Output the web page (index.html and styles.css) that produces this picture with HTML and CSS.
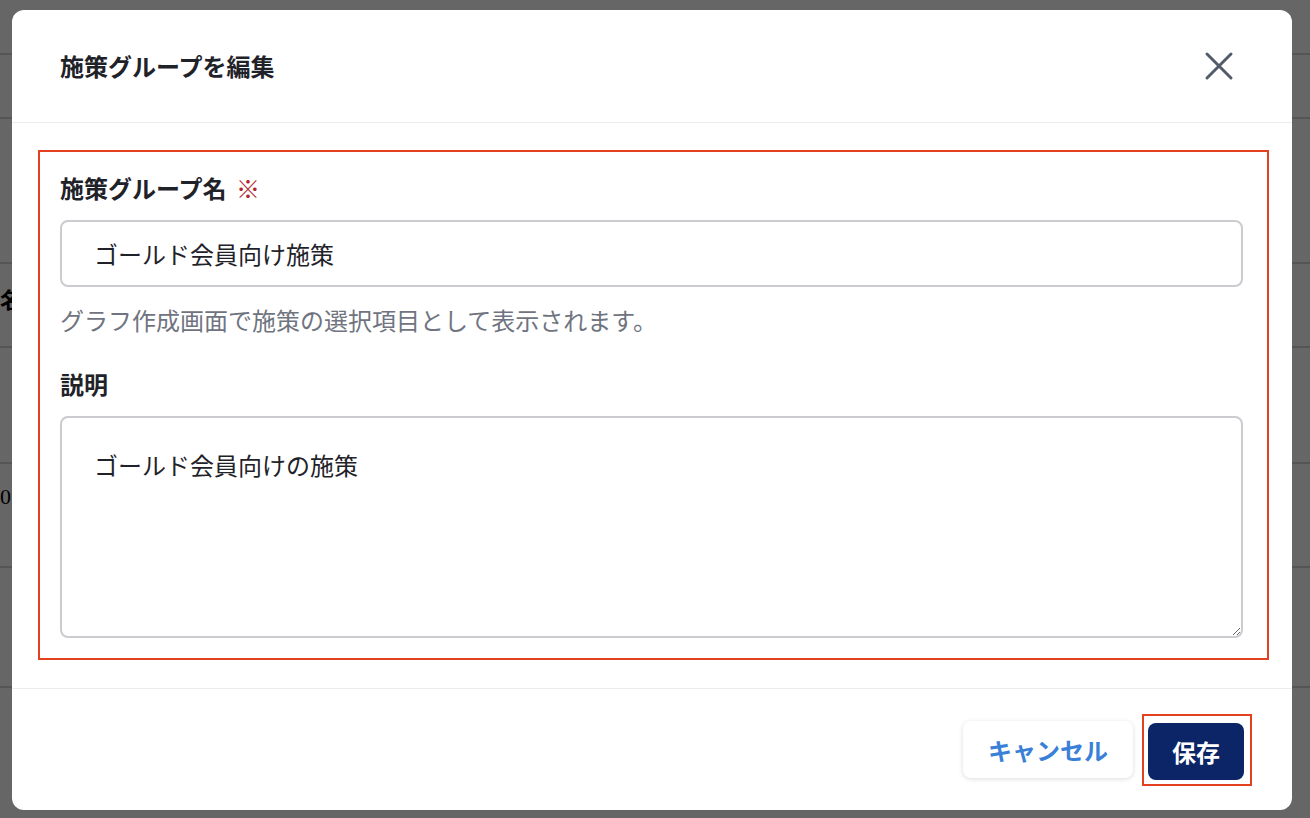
FILE: index.html
```html
<!DOCTYPE html>
<html lang="ja">
<head>
<meta charset="utf-8">
<title>施策グループを編集</title>
<link rel="stylesheet" href="styles.css">
</head>
<body>
<div class="page">
  <div class="page-row r1"></div>
  <div class="page-row r2"></div>
  <div class="page-row r3"></div>
  <div class="page-row r4"><span class="page-text bold">名前</span></div>
  <div class="page-row r5"></div>
  <div class="page-row r6"><span class="page-text serif">01</span></div>
  <div class="page-row r7"></div>
</div>
<div class="overlay"></div>
<div class="modal" role="dialog">
  <div class="modal-header">
    <h2 class="modal-title">施策グループを編集</h2>
    <button class="close-btn" aria-label="閉じる">
      <svg width="32" height="32" viewBox="0 0 32 32"><path d="M4 4 L28 28 M28 4 L4 28" stroke="#535b6b" stroke-width="3" stroke-linecap="round" fill="none"/></svg>
    </button>
  </div>
  <div class="modal-body">
    <div class="highlight">
      <label class="field-label">施策グループ名 <span class="req">※</span></label>
      <input class="text-input" type="text" value="ゴールド会員向け施策">
      <p class="help">グラフ作成画面で施策の選択項目として表示されます。</p>
      <label class="field-label desc-label">説明</label>
      <textarea class="text-area">ゴールド会員向けの施策</textarea>
    </div>
  </div>
  <div class="modal-footer">
    <button class="btn btn-cancel">キャンセル</button>
    <span class="save-mark"><button class="btn btn-save">保存</button></span>
  </div>
</div>
</body>
</html>
```
FILE: styles.css
```css
* { box-sizing: border-box; }
html, body { margin: 0; padding: 0; }
body {
  width: 1310px;
  height: 818px;
  overflow: hidden;
  font-family: "Noto Sans CJK JP", "Noto Sans", sans-serif;
  background: #ffffff;
  position: relative;
}
.page { width: 1310px; }
.page-row { border-bottom: 2px solid #d4d4d4; display: flex; }
.r1 { height: 55px; }
.r2 { height: 64px; }
.r3 { height: 145px; }
.r4 { height: 84px; align-items: center; padding-bottom: 14px; }
.r5 { height: 116px; }
.r6 { height: 104px; align-items: flex-start; padding-top: 18px; }
.r7 { height: 120px; }
.page-text { font-size: 22px; line-height: 30px; color: #000; }
.page-text.bold { font-weight: 700; }
.page-text.serif { font-family: "Liberation Serif", serif; }
.overlay {
  position: absolute;
  inset: 0;
  background: rgba(0, 0, 0, 0.6);
}
.modal {
  position: absolute;
  left: 12px;
  top: 10px;
  width: 1280px;
  height: 800px;
  background: #ffffff;
  border-radius: 12px;
  display: flex;
  flex-direction: column;
}
.modal-header {
  height: 113px;
  flex: none;
  display: flex;
  align-items: center;
  justify-content: space-between;
  padding: 0 57px 0 48px;
  border-bottom: 1.5px solid #ececec;
}
.modal-title {
  margin: 0;
  font-size: 24px;
  font-weight: 700;
  color: #1f2329;
  line-height: 36px;
}
.close-btn {
  border: none;
  background: none;
  padding: 0;
  width: 32px;
  height: 32px;
  display: flex;
}
.modal-body {
  flex: 1;
  padding: 27px 23px 0 26px;
  border-bottom: 1.5px solid #ececec;
}
.highlight {
  border: 2px solid #e3401f;
  padding: 18px 24px 20px 20px;
  display: flex;
  flex-direction: column;
}
.field-label {
  font-size: 24px;
  font-weight: 700;
  color: #1f2329;
  line-height: 36px;
  margin-bottom: 14px;
}
.req { color: #b3262d; font-weight: 400; margin-left: 4px; }
.text-input {
  height: 67px;
  border: 2px solid #cbcbd0;
  border-radius: 8px;
  padding: 0 32px;
  font-family: inherit;
  font-size: 24px;
  color: #1f2329;
  outline: none;
}
.help {
  margin: 15px 0 0;
  font-size: 24px;
  line-height: 36px;
  color: #6f7480;
}
.desc-label { margin-top: 28px; }
.text-area {
  height: 222px;
  border: 2px solid #cbcbd0;
  border-radius: 8px;
  padding: 29px 32px;
  font-family: inherit;
  font-size: 24px;
  line-height: 36px;
  color: #1f2329;
  resize: vertical;
  outline: none;
}
.modal-footer {
  height: 121px;
  flex: none;
  display: flex;
  align-items: center;
  justify-content: flex-end;
  gap: 9px;
  padding: 0 40px 0 0;
}
.btn {
  height: 57px;
  border-radius: 8px;
  font-family: inherit;
  font-size: 24px;
  font-weight: 700;
  border: none;
  cursor: pointer;
}
.btn-cancel {
  width: 170px;
  background: #ffffff;
  color: #3a7fd8;
  box-shadow: 0 1px 5px rgba(0, 0, 0, 0.14);
}
.save-mark {
  display: flex;
  border: 2px solid #e3401f;
  padding: 7px 6px 4px 4px;
}
.btn-save {
  width: 96px;
  background: #0b2566;
  color: #ffffff;
}
```
